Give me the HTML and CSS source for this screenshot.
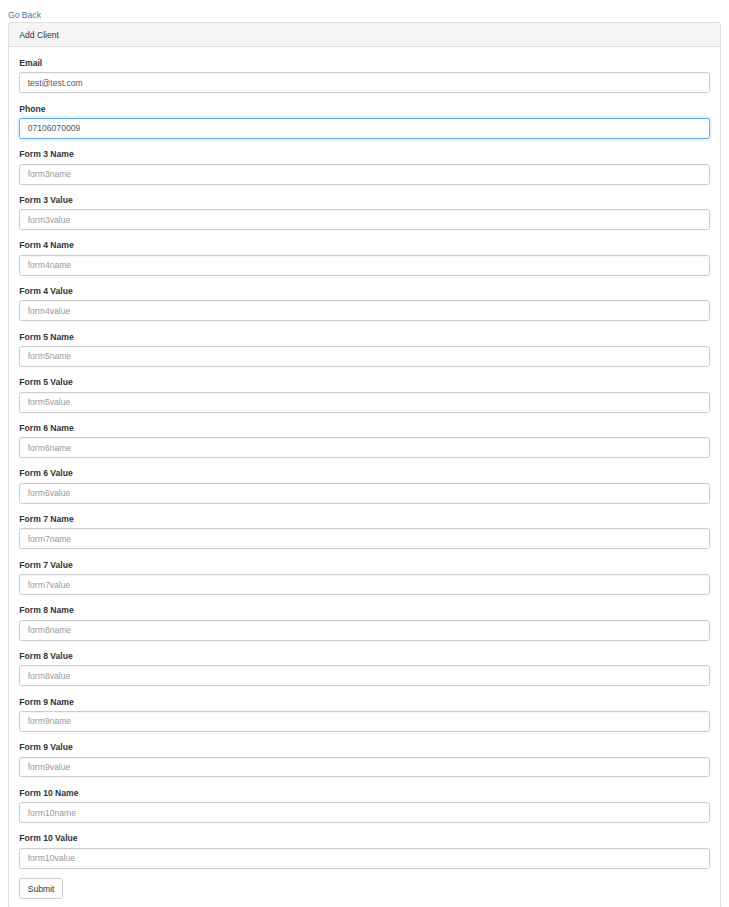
FILE: index.html
```html
<!DOCTYPE html>
<html>
<head>
<meta charset="utf-8">
<link rel="stylesheet" href="styles.css">
</head>
<body>
<a class="go-back" href="#">Go Back</a>
<div class="panel">
  <div class="panel-heading">Add Client</div>
  <div class="panel-body">
    <form class="form">
      <div class="form-group"><label>Email</label><input class="form-control" type="text" value="test@test.com"></div>
      <div class="form-group"><label>Phone</label><input class="form-control focused" type="text" value="07106070009"></div>
      <div class="form-group"><label>Form 3 Name</label><input class="form-control" type="text" placeholder="form3name"></div>
      <div class="form-group"><label>Form 3 Value</label><input class="form-control" type="text" placeholder="form3value"></div>
      <div class="form-group"><label>Form 4 Name</label><input class="form-control" type="text" placeholder="form4name"></div>
      <div class="form-group"><label>Form 4 Value</label><input class="form-control" type="text" placeholder="form4value"></div>
      <div class="form-group"><label>Form 5 Name</label><input class="form-control" type="text" placeholder="form5name"></div>
      <div class="form-group"><label>Form 5 Value</label><input class="form-control" type="text" placeholder="form5value"></div>
      <div class="form-group"><label>Form 6 Name</label><input class="form-control" type="text" placeholder="form6name"></div>
      <div class="form-group"><label>Form 6 Value</label><input class="form-control" type="text" placeholder="form6value"></div>
      <div class="form-group"><label>Form 7 Name</label><input class="form-control" type="text" placeholder="form7name"></div>
      <div class="form-group"><label>Form 7 Value</label><input class="form-control" type="text" placeholder="form7value"></div>
      <div class="form-group"><label>Form 8 Name</label><input class="form-control" type="text" placeholder="form8name"></div>
      <div class="form-group"><label>Form 8 Value</label><input class="form-control" type="text" placeholder="form8value"></div>
      <div class="form-group"><label>Form 9 Name</label><input class="form-control" type="text" placeholder="form9name"></div>
      <div class="form-group"><label>Form 9 Value</label><input class="form-control" type="text" placeholder="form9value"></div>
      <div class="form-group"><label>Form 10 Name</label><input class="form-control" type="text" placeholder="form10name"></div>
      <div class="form-group"><label>Form 10 Value</label><input class="form-control" type="text" placeholder="form10value"></div>
      <button class="btn" type="button">Submit</button>
    </form>
  </div>
</div>
</body>
</html>
```

FILE: styles.css
```css
html, body {
  margin: 0;
  padding: 0;
}
body {
  margin: 8px;
  font-family: "Liberation Sans", Arial, Helvetica, sans-serif;
  font-size: 8.6px;
  line-height: 12.3px;
  color: #333;
  background: #fff;
}
.go-back {
  display: block;
  line-height: 14px;
  color: #337ab7;
  text-decoration: none;
}
.panel {
  border: 1px solid #ddd;
  border-radius: 2.5px;
  background: #fff;
  box-shadow: 0 0.6px 0.6px rgba(0, 0, 0, 0.05);
}
.panel-heading {
  background: #f5f5f5;
  border-bottom: 1px solid #ddd;
  padding: 5.6px 10.3px;
  line-height: 12.3px;
  color: #333;
  border-radius: 2.5px 2.5px 0 0;
}
.panel-body {
  padding: 9.5px 10.3px 9.24px;
}
.form-group {
  margin-bottom: 9.3px;
}
.form-group label {
  display: block;
  font-weight: bold;
  line-height: 12.3px;
  margin-bottom: 3.08px;
}
.form-control {
  display: block;
  box-sizing: border-box;
  width: 100%;
  height: 20.95px;
  margin: 0;
  padding: 3.7px 7.4px;
  font-family: inherit;
  font-size: 8.6px;
  line-height: 12.3px;
  color: #555;
  background: #fff;
  border: 1px solid #ccc;
  border-radius: 2.5px;
  box-shadow: inset 0 0.6px 0.6px rgba(0, 0, 0, 0.075);
  outline: none;
}
.form-control::placeholder {
  color: #999;
}
.form-control.focused {
  border-color: #66afe9;
  box-shadow: inset 0 0.6px 0.6px rgba(0, 0, 0, 0.075), 0 0 3.7px rgba(102, 175, 233, 0.6);
}
.btn {
  display: inline-block;
  box-sizing: border-box;
  height: 20.95px;
  margin: 0;
  padding: 3.7px 7.4px;
  font-family: inherit;
  font-size: 8.6px;
  line-height: 12.3px;
  color: #333;
  background: #fff;
  border: 1px solid #ccc;
  border-radius: 2.5px;
  cursor: pointer;
}
```
